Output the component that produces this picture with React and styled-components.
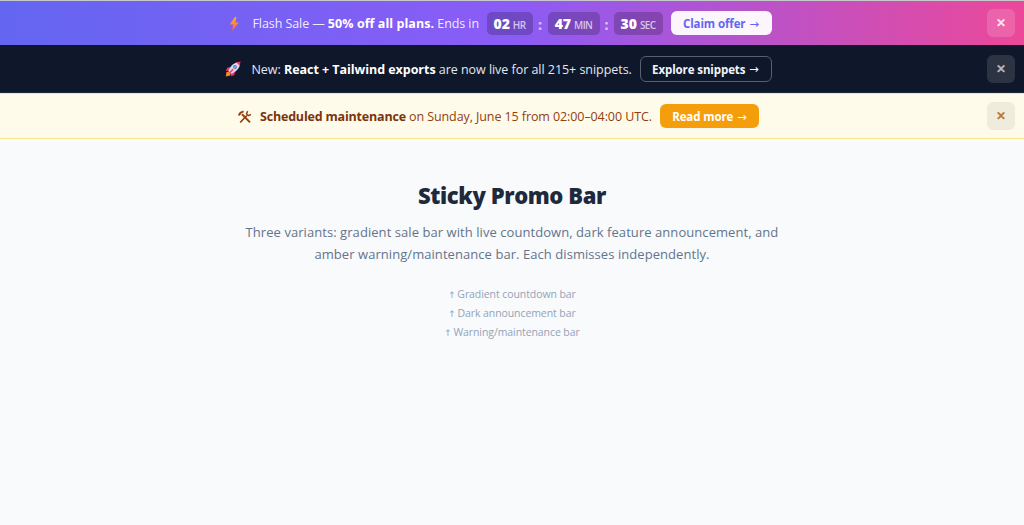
import React, { useState } from "react";
import styled, { createGlobalStyle } from "styled-components";

const bars = {
  sale: {
    height: 44,
    inset: 10,
    background: "linear-gradient(90deg, #6366f1 0%, #8b5cf6 50%, #ec4899 100%)",
    color: "rgba(255, 255, 255, 0.9)",
    strong: "#fff",
    close: "rgba(255, 255, 255, 0.15)",
    closeColor: "rgba(255, 255, 255, 0.8)",
  },
  dark: {
    height: 48,
    inset: 11,
    background: "#0f172a",
    color: "#e2e8f0",
    strong: "#fff",
    close: "rgba(255, 255, 255, 0.12)",
    closeColor: "#b6bccb",
  },
  warning: {
    height: 46,
    inset: 10,
    background: "#fffbeb",
    color: "#92400e",
    strong: "#78350f",
    close: "rgba(0, 0, 0, 0.06)",
    closeColor: "#b4763a",
  },
};

function BoltIcon() {
  return (
    <svg width="12" height="16" viewBox="0 0 12 16">
      <defs>
        <linearGradient id="bolt" x1="0" y1="0" x2="0" y2="1">
          <stop offset="0" stopColor="#ffb02e" />
          <stop offset="1" stopColor="#ff5a4a" />
        </linearGradient>
      </defs>
      <path d="M7.2.8 1.6 8.6h3.6L4 15.2l6.8-8.8H7.3l1.1-5z" fill="url(#bolt)" />
    </svg>
  );
}

function RocketIcon() {
  return (
    <svg width="16" height="16" viewBox="0 0 16 16">
      <path d="M5 6 2.2 6.8.9 10l3.5-.2zM10 11l-.7 2.9L6 15.2l.3-3.6z" fill="#f0365f" />
      <path d="M1.5 11 4 10.8l1.7 1.7-.5 2.1-4.4 1z" fill="#ff8a2a" />
      <path d="M3.4 10.2C4.6 6 8.2 2 12.4 1.2l2.6 2.5c-.8 4.1-4.8 7.7-9 9z" fill="#dcd5ed" />
      <path d="M11 1.6 15.6.4l-1.1 4.8C13.7 3.6 12.6 2.4 11 1.6z" fill="#f0365f" />
      <circle cx="10" cy="6" r="1.9" fill="#6577a0" />
      <circle cx="10" cy="6" r="1.1" fill="#4fc3f7" />
      <path d="m4.6 11.7 3.5-3.5" stroke="#f0365f" strokeWidth="1.4" />
    </svg>
  );
}

function ToolsIcon() {
  return (
    <svg width="14" height="14" viewBox="0 0 14 14" fill="none" stroke="#92400e">
      <path d="m4 4.2 8 8.2" strokeWidth="2" />
      <path d="M.9 5.4C1.5 3.4 3 2 5.6 1.4" strokeWidth="2" />
      <path d="m2.2 12.5 6.6-7" strokeWidth="1.7" />
      <path d="M9.7 1.1 8.5 3.9l1.7 1.7 2.8-1.1" strokeWidth="1.4" />
    </svg>
  );
}

function PromoBar({ variant, children }) {
  const [open, setOpen] = useState(true);
  if (!open) return null;

  return (
    <BarStyled $variant={variant}>
      <div className="content">{children}</div>
      <CloseButton
        $variant={variant}
        aria-label="Dismiss"
        onClick={() => setOpen(false)}
      >
        ✕
      </CloseButton>
    </BarStyled>
  );
}

function App() {
  return (
    <PageStyled>
      <GlobalStyle />
      <PromoBar variant="sale">
        <IconBox $width={17}>
          <BoltIcon />
        </IconBox>
        <Message $width={226} $spacing={-0.08} $boldSpacing={0.06}>
          Flash Sale — <strong>50% off all plans.</strong> Ends in
        </Message>
        <Countdown>
          <TimeChip $width={46}>
            <b>02</b> <small>HR</small>
          </TimeChip>
          <Colon $width={15}>:</Colon>
          <TimeChip $width={52}>
            <b>47</b> <small>MIN</small>
          </TimeChip>
          <Colon $width={14}>:</Colon>
          <TimeChip $width={49}>
            <b>30</b> <small>SEC</small>
          </TimeChip>
        </Countdown>
        <Action $kind="light" $width={101}>
          Claim offer <Arrow>→</Arrow>
        </Action>
      </PromoBar>
      <PromoBar variant="dark">
        <IconBox $width={17}>
          <RocketIcon />
        </IconBox>
        <Message $width={380} $spacing={-0.04} $boldSpacing={-0.04} $drop={2}>
          New: <strong>React + Tailwind exports</strong> are now live for all
          215+ snippets.
        </Message>
        <Action $kind="outline" $width={132}>
          Explore snippets <Arrow>→</Arrow>
        </Action>
      </PromoBar>
      <PromoBar variant="warning">
        <IconBox $width={14} $tight>
          <ToolsIcon />
        </IconBox>
        <Message $width={392} $spacing={-0.09} $boldSpacing={-0.19}>
          <strong>Scheduled maintenance</strong> on Sunday, June 15 from
          02:00–04:00 UTC.
        </Message>
        <Action $kind="amber" $width={99}>
          Read more <Arrow>→</Arrow>
        </Action>
      </PromoBar>
      <IntroStyled>
        <h1>Sticky Promo Bar</h1>
        <p>
          Three variants: gradient sale bar with live countdown, dark feature
          announcement, and
          <br />
          amber warning/maintenance bar. Each dismisses independently.
        </p>
        <ul>
          <li><span>↑</span> Gradient countdown bar</li>
          <li><span>↑</span> Dark announcement bar</li>
          <li><span>↑</span> Warning/maintenance bar</li>
        </ul>
      </IntroStyled>
    </PageStyled>
  );
}

const GlobalStyle = createGlobalStyle`
  * {
    box-sizing: border-box;
    margin: 0;
    padding: 0;
  }
  body {
    background: #f8fafc;
    font-family: "Open Sans", "Noto Sans", sans-serif;
  }
`;

const PageStyled = styled.div`
  min-height: 525px;
  border-top: 1px solid #c6c8cc;
`;

const BarStyled = styled.div`
  display: flex;
  align-items: center;
  height: ${({ $variant }) => bars[$variant].height}px;
  padding: 0 9px 0 20px;
  background: ${({ $variant }) => bars[$variant].background};
  color: ${({ $variant }) => bars[$variant].color};
  border-bottom: ${({ $variant }) =>
    ({ sale: "0", dark: "1px solid #1e293b", warning: "1px solid #fde68a" })[$variant]};
  border-top: ${({ $variant }) => ($variant === "warning" ? "1px solid #fde68a" : "0")};
  strong {
    font-weight: 700;
    color: ${({ $variant }) => bars[$variant].strong};
  }
  .content {
    flex: 1;
    display: flex;
    align-items: center;
    justify-content: center;
    gap: 8px;
    padding-right: ${({ $variant }) => bars[$variant].inset}px;
  }
`;

const IconBox = styled.span`
  display: flex;
  justify-content: center;
  width: ${({ $width }) => $width}px;
  padding-top: 1px;
  margin-right: ${({ $tight }) => ($tight ? 0 : 2)}px;
`;

const Message = styled.span`
  width: ${({ $width }) => $width}px;
  padding-top: ${({ $drop = 1 }) => $drop}px;
  font-size: 12.5px;
  line-height: 20px;
  letter-spacing: ${({ $spacing }) => $spacing}px;
  white-space: nowrap;
  strong {
    letter-spacing: ${({ $boldSpacing }) => $boldSpacing}px;
  }
`;

const Countdown = styled.span`
  display: flex;
  align-items: center;
`;

const TimeChip = styled.span`
  display: flex;
  align-items: baseline;
  justify-content: center;
  gap: 3px;
  width: ${({ $width }) => $width}px;
  height: 23px;
  border-radius: 5px;
  background: rgba(0, 0, 0, 0.2);
  line-height: 23px;
  b {
    font-size: 14px;
    font-weight: 800;
    color: #fff;
  }
  small {
    font-size: 10px;
    font-weight: 600;
    letter-spacing: -0.6px;
    color: rgba(255, 255, 255, 0.7);
  }
`;

const Colon = styled.span`
  width: ${({ $width }) => $width}px;
  padding-top: 2px;
  text-align: center;
  font-size: 14px;
  font-weight: 800;
  color: rgba(255, 255, 255, 0.6);
`;

const actionStyles = {
  light: "background: rgba(255, 255, 255, 0.95); color: #6366f1; height: 24px;",
  outline:
    "background: transparent; color: #f1f5f9; border: 1px solid #57606f; height: 26px;",
  amber: "background: #f59e0b; color: #fff; height: 24px;",
};

const Action = styled.button`
  display: flex;
  align-items: center;
  justify-content: center;
  gap: 4px;
  width: ${({ $width }) => $width}px;
  padding-top: 1px;
  border: 0;
  border-radius: 6px;
  font-family: inherit;
  font-size: 11.5px;
  font-weight: 700;
  letter-spacing: -0.1px;
  white-space: nowrap;
  ${({ $kind }) => actionStyles[$kind]}
`;

const Arrow = styled.span`
  font-family: "DejaVu Sans", sans-serif;
  font-size: 11.5px;
  font-weight: 400;
`;

const CloseButton = styled.button`
  width: 28px;
  height: 28px;
  border: 0;
  border-radius: 6px;
  background: ${({ $variant }) => bars[$variant].close};
  color: ${({ $variant }) => bars[$variant].closeColor};
  font-family: "DejaVu Sans", sans-serif;
  font-size: 12px;
  font-weight: 700;
  -webkit-text-stroke: 0.5px currentColor;
`;

const IntroStyled = styled.main`
  padding-top: 40px;
  text-align: center;
  h1 {
    font-size: 22px;
    font-weight: 800;
    line-height: 32px;
    letter-spacing: -0.4px;
    color: #1e293b;
  }
  p {
    margin-top: 10px;
    font-size: 13px;
    line-height: 22px;
    color: #64748b;
    letter-spacing: 0.06px;
    white-space: nowrap;
  }
  ul {
    margin-top: 20px;
    list-style: none;
  }
  li {
    height: 19px;
    font-size: 10.5px;
    line-height: 19px;
    letter-spacing: -0.08px;
    color: #94a3b8;
  }
  li span {
    margin-right: -1px;
    font-family: "DejaVu Sans", sans-serif;
    font-size: 9px;
    line-height: 1;
  }
`;

export default App;
